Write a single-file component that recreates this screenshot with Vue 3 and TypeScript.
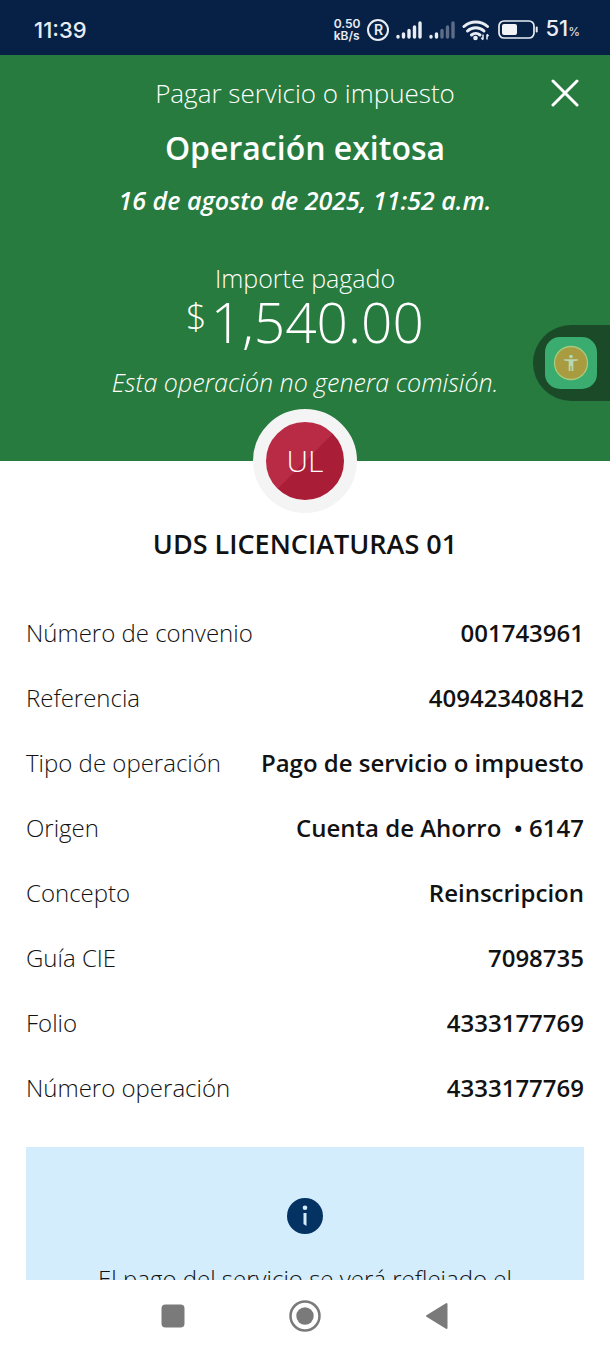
<script setup lang="ts">
interface Detail {
  label: string
  value: string
}

const details: Detail[] = [
  { label: 'Número de convenio', value: '001743961' },
  { label: 'Referencia', value: '409423408H2' },
  { label: 'Tipo de operación', value: 'Pago de servicio o impuesto' },
  { label: 'Origen', value: 'Cuenta de Ahorro \u00a0• 6147' },
  { label: 'Concepto', value: 'Reinscripcion' },
  { label: 'Guía CIE', value: '7098735' },
  { label: 'Folio', value: '4333177769' },
  { label: 'Número operación', value: '4333177769' },
]
</script>

<template>
  <div class="screen">
    <div class="status">
      <time class="clock">11:39</time>
      <div class="indicators">
        <span class="speed"><span>0.50</span><span>kB/s</span></span>
        <span class="registered">R</span>
        <svg class="signal" viewBox="0 0 26 18" width="26" height="18" aria-hidden="true">
          <g stroke="#e9edf3" stroke-width="3.400" stroke-linecap="round">
            <path d="M2 15.500v.5M7.500 13v3M13 9.500v6.500M18.500 6v10M24 2v14" />
          </g>
        </svg>
        <svg class="signal" viewBox="0 0 26 18" width="26" height="18" aria-hidden="true">
          <g stroke-width="3.400" stroke-linecap="round">
            <path d="M2 15.500v.5M7.500 13v3" stroke="#e9edf3" />
            <path d="M13 9.500v6.500M18.500 6v10M24 2v14" stroke="#5d6d86" />
          </g>
        </svg>
        <svg class="wifi" viewBox="0 0 28 22" width="28" height="22" aria-hidden="true">
          <g fill="none" stroke="#e9edf3" stroke-width="3" stroke-linecap="round">
            <path d="M2 7.500a17.500 17.500 0 0 1 23.500 0" />
            <path d="M5.500 12a12 12 0 0 1 16.500 0" />
            <path d="M9.500 16a6.500 6.500 0 0 1 8.500 0" />
          </g>
          <circle cx="13.500" cy="19" r="2.300" fill="#e9edf3" />
          <path d="M21 15.500v5M19.300 18.700l1.700 2 M25 20.500v-5M26.500 17.300l-1.500-2" fill="none" stroke="#e9edf3" stroke-width="1.500" />
        </svg>
        <svg class="battery" viewBox="0 0 41 20" width="41" height="20" aria-hidden="true">
          <rect x="2" y="1" width="35" height="17" rx="5" fill="none" stroke="#e9edf3" stroke-width="1.700" />
          <rect x="5" y="4" width="15" height="11" rx="2" fill="#f1f3f6" />
          <path d="M39.700 7.500v4" stroke="#e9edf3" stroke-width="2" stroke-linecap="round" />
        </svg>
        <span class="charge">51<small>%</small></span>
      </div>
    </div>

    <main class="content">
      <header class="hero">
        <div class="topbar">
          <p class="title">Pagar servicio o impuesto</p>
          <button class="close" type="button" aria-label="Cerrar">
            <svg viewBox="0 0 28 28" width="28" height="28" aria-hidden="true">
              <path d="M2 2l24 24M26 2L2 26" stroke="#fff" stroke-width="3" stroke-linecap="round" />
            </svg>
          </button>
        </div>
        <h1 class="result">Operación exitosa</h1>
        <p class="date">16 de agosto de 2025, 11:52 a.m.</p>
        <p class="caption">Importe pagado</p>
        <p class="amount"><span class="currency">$</span><span>1,540.00</span></p>
        <p class="fee">Esta operación no genera comisión.</p>
        <button class="assist" type="button" aria-label="Accesibilidad">
          <svg viewBox="0 0 52 52" width="52" height="52" aria-hidden="true">
            <rect width="52" height="52" rx="15" fill="#3bac70" />
            <circle cx="26" cy="26" r="16.500" fill="#a99b40" stroke="#a6cb7c" stroke-width="1.300" />
            <circle cx="26" cy="19.500" r="1.800" fill="#b7d8b5" />
            <path d="M19 22.200h14v1.300l-4.700.7V34h-1.700v-5h-1.200v5h-1.700v-9.800l-4.700-.7z" fill="#b7d8b5" />
          </svg>
        </button>
      </header>

      <div class="avatar"><span>UL</span></div>
      <h2 class="merchant">UDS LICENCIATURAS 01</h2>

      <dl class="details">
        <div v-for="item in details" :key="item.label" class="row">
          <dt>{{ item.label }}</dt>
          <dd>{{ item.value }}</dd>
        </div>
      </dl>

      <section class="notice">
        <svg viewBox="0 0 36 36" width="36" height="36" aria-hidden="true">
          <circle cx="18" cy="18" r="18" fill="#043263" />
          <circle cx="18" cy="9.700" r="2.300" fill="#d4edfc" />
          <path d="M16.500 15h3v13l-3-2z" fill="#d4edfc" />
        </svg>
        <p>El pago del servicio se verá reflejado el</p>
      </section>
    </main>

    <nav class="system">
      <button type="button" aria-label="Recientes">
        <svg viewBox="0 0 36 36" width="36" height="36" aria-hidden="true">
          <rect x="6.500" y="6.500" width="23" height="23" rx="4" fill="#7a7a7a" />
        </svg>
      </button>
      <button type="button" aria-label="Inicio">
        <svg viewBox="0 0 36 36" width="36" height="36" aria-hidden="true">
          <circle cx="18" cy="18" r="14.500" fill="none" stroke="#7a7a7a" stroke-width="2.500" />
          <circle cx="18" cy="18" r="8.700" fill="#7a7a7a" />
        </svg>
      </button>
      <button type="button" aria-label="Atrás">
        <svg viewBox="0 0 36 36" width="36" height="36" aria-hidden="true">
          <path d="M8 18L27.500 6v24z" fill="#7a7a7a" stroke="#7a7a7a" stroke-width="2" stroke-linejoin="round" />
        </svg>
      </button>
    </nav>
  </div>
</template>

<style>
body {
  margin: 0;
  background: #fff;
}
</style>

<style scoped>
.screen {
  display: flex;
  flex-direction: column;
  height: 100vh;
  background: #fff;
  color: #121212;
  font-family: "Open Sans", "Noto Sans", sans-serif;
  font-size: 24px;
  line-height: 32px;
}

p,
h1,
h2,
dl,
dd {
  margin: 0;
}

button {
  padding: 0;
  border: 0;
  background: none;
  cursor: pointer;
}

svg {
  display: block;
}

.status {
  display: flex;
  flex: none;
  align-items: center;
  justify-content: space-between;
  box-sizing: border-box;
  height: 55px;
  padding: 4px 30px 0 34px;
  background: #072146;
  color: #e9edf3;
  font-family: Inter, sans-serif;
}

.clock {
  font-size: 22px;
  font-weight: 500;
}

.indicators {
  display: flex;
  align-items: center;
  gap: 7px;
}

.speed {
  display: flex;
  flex-direction: column;
  font-size: 12px;
  font-weight: 600;
  line-height: 12px;
}

.registered {
  box-sizing: border-box;
  width: 22px;
  height: 22px;
  border: 2px solid #e9edf3;
  border-radius: 50%;
  font-size: 14px;
  font-weight: 600;
  line-height: 18px;
  text-align: center;
}

.charge {
  font-size: 22px;
  font-weight: 500;
}

.charge small {
  font-size: 12px;
  font-weight: 400;
}

.content {
  flex: 1;
  min-height: 0;
  overflow-y: auto;
  scrollbar-width: none;
}

.hero {
  position: relative;
  padding: 22px 0 63px;
  background: #277b3e;
  color: #fff;
  font-size: 25px;
  font-weight: 300;
  text-align: center;
}

.topbar {
  display: grid;
  grid-template-columns: 64px 1fr 64px;
  align-items: center;
  padding: 0 13px;
}

.title {
  grid-column: 2;
  font-size: 26px;
}

.close {
  display: flex;
  justify-content: center;
}

.result {
  margin-top: 19px;
  font-size: 32px;
  font-weight: 600;
  line-height: 40px;
}

.date {
  margin-top: 16px;
  font-style: italic;
  font-weight: 600;
}

.caption {
  margin-top: 46px;
}

.amount {
  display: flex;
  justify-content: center;
  gap: 4px;
  font-size: 55px;
  line-height: 56px;
}

.currency {
  font-size: 36px;
  line-height: 46px;
}

.fee {
  margin-top: 16px;
  font-style: italic;
}

.assist {
  position: absolute;
  right: 0;
  bottom: 60px;
  padding: 12px 13px 12px 12px;
  border-radius: 38px 0 0 38px;
  background: #1a4a27;
}

.avatar {
  position: relative;
  display: flex;
  align-items: center;
  justify-content: center;
  box-sizing: border-box;
  width: 104px;
  height: 104px;
  margin: -52px auto 0;
  border: 13px solid #f4f4f4;
  border-radius: 50%;
  background: linear-gradient(135deg, #b92a45 50%, #a91d36 50%);
  background-origin: border-box;
  color: #fff;
  font-size: 30px;
  font-weight: 300;
}

.merchant {
  margin-top: 15px;
  font-size: 27px;
  font-weight: 600;
  text-align: center;
}

.details {
  margin-top: 40px;
  padding: 0 26px;
}

.row {
  display: flex;
  align-items: center;
  justify-content: space-between;
  min-height: 65px;
}

dt {
  font-weight: 300;
}

dd {
  font-weight: 600;
  text-align: right;
}

.notice {
  display: flex;
  flex-direction: column;
  align-items: center;
  gap: 29px;
  margin: 27px 26px 0;
  padding: 51px 26px;
  background: #d4edfc;
  font-weight: 300;
  text-align: center;
}

.system {
  display: flex;
  flex: none;
  justify-content: center;
  gap: 96px;
  padding: 18px 0 22px;
  background: #fff;
}
</style>
